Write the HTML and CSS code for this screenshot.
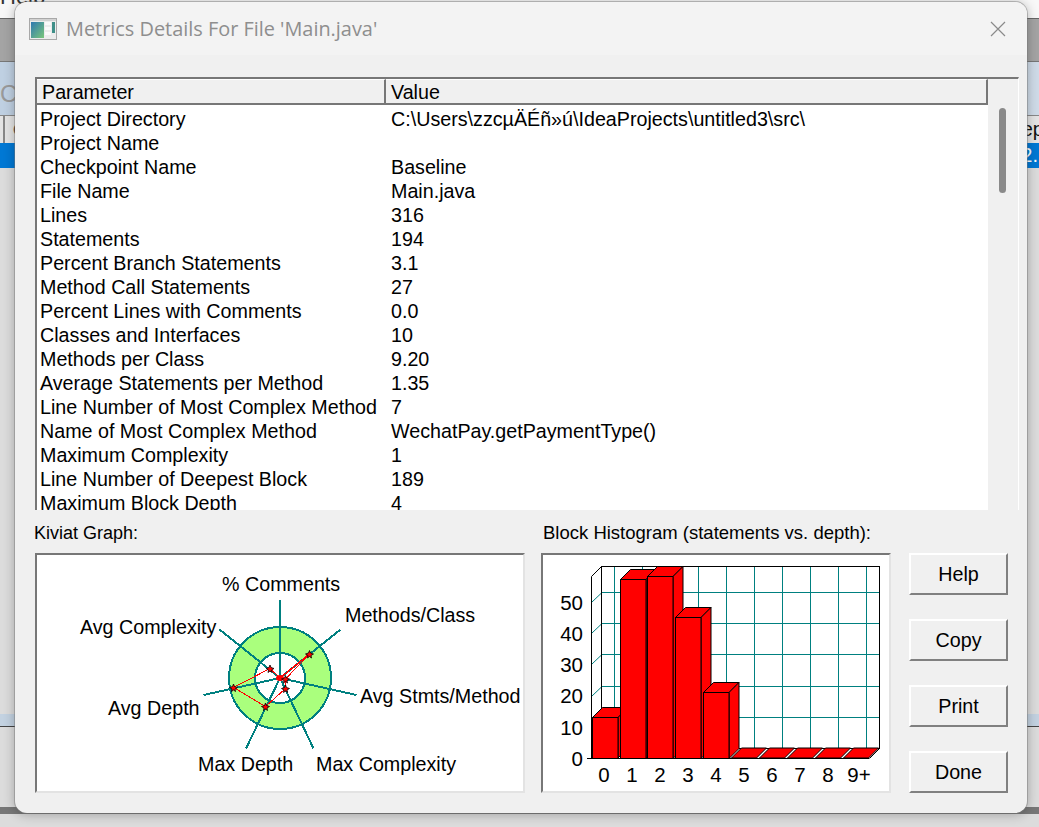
FILE: index.html
```html
<!DOCTYPE html>
<html lang="en">
<head>
<meta charset="utf-8">
<title>Metrics Details For File 'Main.java'</title>
<link rel="stylesheet" href="styles.css">
</head>
<body>
<div class="desktop">
  <div class="bg-menu"><span class="bg-help">Help</span></div>
  <div class="bg-toolbar"></div>
  <div class="bg-banner"><span class="bg-c">Cl</span></div>
  <div class="bg-head"><span class="bg-cell">c</span><span class="bg-right">ep</span></div>
  <div class="bg-selected"><span class="bg-right-sel">2.</span></div>
  <div class="bg-body"></div>
  <div class="bg-band"></div>
  <div class="bg-lower"></div>
  <div class="bg-dark"></div>
  <div class="bg-foot"></div>
</div>

<div class="dialog">
  <header class="titlebar">
    <svg class="app-icon" width="28" height="22" viewBox="0 0 28 22">
      <defs>
        <linearGradient id="appg" x1="0" y1="0" x2="1" y2="1">
          <stop offset="0" stop-color="#2f78b0"/>
          <stop offset="1" stop-color="#79c77a"/>
        </linearGradient>
      </defs>
      <rect x="0.5" y="0.5" width="27" height="21" fill="#ececec" stroke="#a8a8a8"/>
      <rect x="1" y="1" width="26" height="2" fill="#d2d2d2"/>
      <rect x="2" y="4" width="13" height="16" fill="url(#appg)"/>
      <rect x="16" y="4" width="6" height="3" fill="#fafafa"/>
      <rect x="16" y="9" width="6" height="3" fill="#fafafa"/>
      <rect x="16" y="14" width="6" height="3" fill="#fafafa"/>
      <rect x="23" y="4" width="3" height="11" fill="#3f8f88"/>
    </svg>
    <span class="title-text">Metrics Details For File 'Main.java'</span>
    <svg class="close" width="16" height="16" viewBox="0 0 16 16">
      <path d="M1 1L15 15M15 1L1 15" stroke="#8a8a8a" stroke-width="1.2" fill="none"/>
    </svg>
  </header>

  <div class="content">
    <section class="table-box">
      <div class="table-main">
        <div class="table-head">
          <div class="th th-param">Parameter</div>
          <div class="th th-value">Value</div>
        </div>
        <div class="rows">
          <div class="row"><span>Project Directory</span><span>C:\Users\zzcµÄÉñ»ú\IdeaProjects\untitled3\src\</span></div>
          <div class="row"><span>Project Name</span><span></span></div>
          <div class="row"><span>Checkpoint Name</span><span>Baseline</span></div>
          <div class="row"><span>File Name</span><span>Main.java</span></div>
          <div class="row"><span>Lines</span><span>316</span></div>
          <div class="row"><span>Statements</span><span>194</span></div>
          <div class="row"><span>Percent Branch Statements</span><span>3.1</span></div>
          <div class="row"><span>Method Call Statements</span><span>27</span></div>
          <div class="row"><span>Percent Lines with Comments</span><span>0.0</span></div>
          <div class="row"><span>Classes and Interfaces</span><span>10</span></div>
          <div class="row"><span>Methods per Class</span><span>9.20</span></div>
          <div class="row"><span>Average Statements per Method</span><span>1.35</span></div>
          <div class="row"><span>Line Number of Most Complex Method</span><span>7</span></div>
          <div class="row"><span>Name of Most Complex Method</span><span>WechatPay.getPaymentType()</span></div>
          <div class="row"><span>Maximum Complexity</span><span>1</span></div>
          <div class="row"><span>Line Number of Deepest Block</span><span>189</span></div>
          <div class="row"><span>Maximum Block Depth</span><span>4</span></div>
        </div>
      </div>
      <div class="scroll"><div class="thumb"></div></div>
    </section>

    <section class="lower">
      <div class="panel panel-kiviat">
        <div class="panel-label label-kiviat">Kiviat Graph:</div>
        <div class="chart">
          <svg class="chart-svg" width="486" height="235" viewBox="37 555 486 235">
            <g class="crisp">
              <circle cx="280" cy="678" r="51" fill="#aaff7d" stroke="#008080" stroke-width="2"/>
              <circle cx="280" cy="678" r="25" fill="#fff" stroke="#008080" stroke-width="2"/>
              <path d="M280 678L280 600M280 678L340.5 629.5M280 678L356.5 695M280 678L313.5 748.5M280 678L246 748.5M280 678L203.5 695M280 678L219.5 629.5" fill="none" stroke="#008080" stroke-width="2"/>
              <polygon points="280,678 309.5,654 285.5,679 285.5,688.5 265.5,706.5 233.5,687.5 270,668.5" fill="none" stroke="#f00" stroke-width="1"/>
              <path d="M280 678L309.5 654" stroke="#f00" stroke-width="1.5"/>
            </g>
            <ellipse cx="280" cy="678" rx="4" ry="3" fill="#f00"/>
            <g class="marks">
              <path d="M309.5 650.5l1 2.5 3 1-2.5 1.5 0.5 2.5-2-1.5-2 1.5 0.5-2.5-2.5-1.5 3-1z"/>
              <path d="M285.5 675.5l1 2.5 3 1-2.5 1.5 0.5 2.5-2-1.5-2 1.5 0.5-2.5-2.5-1.5 3-1z"/>
              <path d="M285.5 685l1 2.5 3 1-2.5 1.5 0.5 2.5-2-1.5-2 1.5 0.5-2.5-2.5-1.5 3-1z"/>
              <path d="M265.5 703l1 2.5 3 1-2.5 1.5 0.5 2.5-2-1.5-2 1.5 0.5-2.5-2.5-1.5 3-1z"/>
              <path d="M233.5 684l1 2.5 3 1-2.5 1.5 0.5 2.5-2-1.5-2 1.5 0.5-2.5-2.5-1.5 3-1z"/>
              <path d="M270 665l1 2.5 3 1-2.5 1.5 0.5 2.5-2-1.5-2 1.5 0.5-2.5-2.5-1.5 3-1z"/>
            </g>
            <g class="chart-text">
              <text x="222" y="591">% Comments</text>
              <text x="345" y="622">Methods/Class</text>
              <text x="80" y="634">Avg Complexity</text>
              <text x="360" y="703">Avg Stmts/Method</text>
              <text x="108" y="715">Avg Depth</text>
              <text x="198" y="771">Max Depth</text>
              <text x="316" y="771">Max Complexity</text>
            </g>
          </svg>
        </div>
      </div>

      <div class="panel panel-hist">
        <div class="panel-label label-hist">Block Histogram (statements vs. depth):</div>
        <div class="chart">
          <svg class="chart-svg" width="346" height="235" viewBox="543 555 346 235">
            <g class="crisp" stroke="#008080" stroke-width="1" fill="none">
              <path d="M602 592.5H879M602 623.5H879M602 654.5H879M602 686.5H879M602 717.5H879"/>
              <path d="M614.5 567V748M642.5 567V748M670.5 567V748M698.5 567V748M726.5 567V748M754.5 567V748M782.5 567V748M810.5 567V748M838.5 567V748M866.5 567V748"/>
            </g>
            <g stroke="#008080" stroke-width="1" fill="none">
              <path d="M592 602L602 592.5M592 633L602 623.5M592 664L602 654.5M592 696L602 686.5M592 727L602 717.5"/>
            </g>
            <path class="crisp" d="M601.5 748.5V566.5H879.5V748.5H601.5" fill="none" stroke="#000"/>
            <path d="M591.5 576.5V758.5M591.5 576.5L601.5 566.5M591.5 758.5L601.5 748.5M879.5 748.5L869.5 758.5" fill="none" stroke="#000"/>
            <path class="crisp" d="M587 758.5H869" stroke="#000"/>

            <g stroke="#000" stroke-width="1" fill="#f00">
              <path d="M592.5 717.5l10-10h25.5l-10 10z"/>
              <path d="M618 717.5l10-10v40.5l-10 10z"/>
              <rect x="592.5" y="717.5" width="25.5" height="41"/>

              <path d="M620.5 579.5l10-10h25.5l-10 10z"/>
              <path d="M646 579.5l10-10v179l-10 10z"/>
              <rect x="620.5" y="579.5" width="25.5" height="179"/>

              <path d="M647.5 576.5l10-10h25.5l-10 10z"/>
              <path d="M673 576.5l10-10v182l-10 10z"/>
              <rect x="647.5" y="576.5" width="25.5" height="182"/>

              <path d="M675.5 617.5l10-10h25.5l-10 10z"/>
              <path d="M701 617.5l10-10v141l-10 10z"/>
              <rect x="675.5" y="617.5" width="25.5" height="141"/>

              <path d="M703.5 692.5l10-10h25.5l-10 10z"/>
              <path d="M729 692.5l10-10v66l-10 10z"/>
              <rect x="703.5" y="692.5" width="25.5" height="66"/>

              <path d="M731.5 758l10-10h25l-10 10z"/>
              <path d="M759.5 758l10-10h25l-10 10z"/>
              <path d="M787.5 758l10-10h25l-10 10z"/>
              <path d="M815.5 758l10-10h25l-10 10z"/>
              <path d="M843.5 758l10-10h25l-10 10z"/>
            </g>

            <g class="axis-text">
              <text x="583" y="610" text-anchor="end">50</text>
              <text x="583" y="641" text-anchor="end">40</text>
              <text x="583" y="672" text-anchor="end">30</text>
              <text x="583" y="703" text-anchor="end">20</text>
              <text x="583" y="735" text-anchor="end">10</text>
              <text x="583" y="766" text-anchor="end">0</text>
              <text x="604" y="782" text-anchor="middle">0</text>
              <text x="632" y="782" text-anchor="middle">1</text>
              <text x="660" y="782" text-anchor="middle">2</text>
              <text x="688" y="782" text-anchor="middle">3</text>
              <text x="716" y="782" text-anchor="middle">4</text>
              <text x="744" y="782" text-anchor="middle">5</text>
              <text x="772" y="782" text-anchor="middle">6</text>
              <text x="800" y="782" text-anchor="middle">7</text>
              <text x="828" y="782" text-anchor="middle">8</text>
              <text x="859" y="782" text-anchor="middle">9+</text>
            </g>
          </svg>
        </div>
      </div>

      <div class="buttons">
        <button class="btn" type="button">Help</button>
        <button class="btn" type="button">Copy</button>
        <button class="btn" type="button">Print</button>
        <button class="btn" type="button">Done</button>
      </div>
    </section>
  </div>
</div>
</body>
</html>
```

FILE: styles.css
```css
* { box-sizing: border-box; }
html, body { margin: 0; padding: 0; }
body {
  width: 1039px;
  height: 827px;
  overflow: hidden;
  position: relative;
  font-family: "Liberation Sans", Arial, sans-serif;
  background: #d8d8d8;
}

/* Application behind the dialog */
.desktop { display: flex; flex-direction: column; height: 827px; overflow: hidden; }
.bg-menu { height: 18px; background: #f8f8f8; overflow: hidden; }
.bg-help { display: block; margin-top: -15px; font-size: 22px; line-height: 24px; color: #333; }
.bg-toolbar { height: 44px; background: #a4a4a4; border-top: 1px solid #666; border-bottom: 1px solid #777; }
.bg-banner { height: 53px; background: linear-gradient(90deg, #bfd0e2, #cfdbe8); overflow: hidden; }
.bg-c { display: block; padding-top: 18px; font-size: 24px; line-height: 28px; color: #999; }
.bg-head { height: 28px; background: #e4e4e4; display: flex; justify-content: space-between; align-items: center; border-top: 1px solid #888; font-size: 20px; overflow: hidden; }
.bg-cell { margin-left: 3px; padding-left: 8px; height: 100%; line-height: 24px; color: #222; border-left: 2px solid #888; }
.bg-right { color: #111; margin-right: -5px; }
.bg-selected { height: 25px; background: #0078d4; display: flex; justify-content: flex-end; align-items: center; color: #fff; font-size: 20px; }
.bg-right-sel { padding-right: 1px; }
.bg-body { height: 546px; background: #dcdcdc; }
.bg-band { height: 13px; background: #c3d2e1; border-bottom: 1px solid #444; }
.bg-lower { height: 80px; background: #dcdcdc; }
.bg-dark { height: 7px; background: #777; }
.bg-foot { height: 13px; background: #dcdcdc; }

/* Dialog window */
.dialog {
  position: absolute;
  left: 15px;
  top: 2px;
  width: 1012px;
  height: 811px;
  display: flex;
  flex-direction: column;
  background: #f0f0f0;
  border-radius: 12px;
  box-shadow: 0 0 0 1px rgba(120,120,120,.45), 0 1px 12px rgba(0,0,0,.3);
  overflow: hidden;
}
.titlebar {
  height: 53px;
  flex: none;
  display: flex;
  align-items: center;
  background: #f3f3f3;
  padding: 0 21px 0 14px;
}
.app-icon { flex: none; margin-right: 10px; }
.title-text { flex: 1; margin-left: -1px; font-family: "Open Sans", sans-serif; font-size: 19.9px; color: #8e8e8e; }
.close { flex: none; }

.content { flex: 1; display: flex; flex-direction: column; padding: 22px 9px 0 20px; }

/* Parameter table */
.table-box {
  flex: none;
  width: 984px;
  height: 433px;
  display: flex;
  border-top: 2px solid #777;
  border-left: 2px solid #777;
  border-right: 1px solid #fff;
  overflow: hidden;
}
.table-main { width: 951px; flex: none; background: #fff; display: flex; flex-direction: column; }
.table-head { height: 26px; flex: none; display: flex; background: #f0f0f0; border-bottom: 2px solid #777; }
.th { font-size: 19.7px; line-height: 25px; color: #000; border-right: 2px solid #777; border-top: 1px solid #fff; }
.th-param { width: 349px; padding-left: 5px; }
.th-value { flex: 1; padding-left: 5px; }
.rows { padding: 2px 0 0 3px; overflow: hidden; }
.row { display: grid; grid-template-columns: 351px 1fr; height: 24px; font-size: 19.7px; line-height: 24px; color: #000; white-space: nowrap; }
.scroll { flex: 1; background: #f0f0f0; padding: 29px 11px 0 11px; }
.thumb { width: 7px; height: 85px; background: #8a8a8a; border-radius: 4px; }

/* Lower area */
.lower { flex: none; display: flex; padding-top: 11px; }
.panel { display: flex; flex-direction: column; }
.panel-kiviat { width: 490px; margin-right: 16px; }
.panel-hist { width: 350px; margin-right: 18px; }
.panel-label { height: 32px; line-height: 24px; color: #000; white-space: nowrap; }
.label-kiviat { font-size: 18px; margin-left: -1px; }
.label-hist { font-size: 18.5px; margin-left: 2px; }
.chart {
  height: 240px;
  background: #fff;
  border: 2px solid;
  border-color: #777 #e3e3e3 #e3e3e3 #777;
}
.chart-svg { display: block; }
.chart-text { font-family: "Liberation Sans", Arial, sans-serif; font-size: 19.7px; fill: #000; }
.axis-text { font-family: "Liberation Sans", Arial, sans-serif; font-size: 20.5px; fill: #000; }
.crisp { shape-rendering: crispEdges; }
.marks path { fill: #f00; stroke: #000; stroke-width: .8; }

.buttons { display: flex; flex-direction: column; gap: 24px; padding-top: 32px; }
.btn {
  width: 99px;
  height: 42px;
  padding: 0;
  background: #f0f0f0;
  border: 2px solid;
  border-color: #fff #808080 #808080 #fff;
  font-family: "Liberation Sans", Arial, sans-serif;
  font-size: 19.7px;
  color: #000;
}
```
